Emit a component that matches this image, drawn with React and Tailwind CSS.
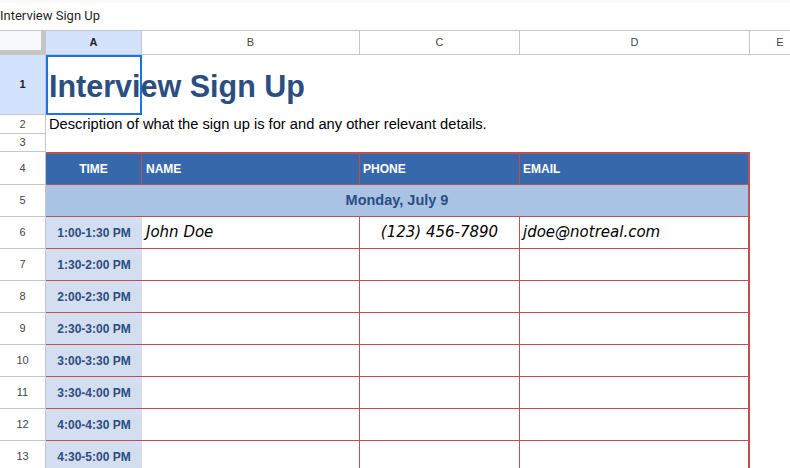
import React from "react";

const gray = "border-[#c4c7c5]";

const times = [
  "1:30-2:00 PM",
  "2:00-2:30 PM",
  "2:30-3:00 PM",
  "3:00-3:30 PM",
  "3:30-4:00 PM",
  "4:00-4:30 PM",
  "4:30-5:00 PM",
];

const RowHead = ({ n, sel }) => (
  <div
    className={`w-[46px] shrink-0 flex items-center justify-center border-r border-b border-[#c4c7c5] text-[11px] ${
      sel ? "bg-[#d3e3fd] font-bold text-[#1f1f1f]" : "bg-white text-[#444746]"
    }`}
  >
    {n}
  </div>
);

const hand = { fontFamily: "'Comic Sans MS', 'DejaVu Sans', sans-serif" };

const App = () => {
  return (
    <div
      className="w-[790px] h-[468px] overflow-hidden bg-white"
      style={{ fontFamily: "'Liberation Sans', Arial, sans-serif" }}
    >
      {/* title bar */}
      <div className="h-[3px] bg-[#f8f9fa]" />
      <div
        className="h-[27px] flex items-center text-[13px] text-[#1f1f1f] pb-[1px]"
        style={{ fontFamily: "Roboto, 'Liberation Sans', sans-serif" }}
      >
        Interview Sign Up
      </div>

      {/* column letters */}
      <div className={`flex h-[25px] border-t border-b ${gray} text-[11px] text-[#444746]`}>
        <div className="w-[46px] shrink-0 bg-[#f8f9fa] border-r-[5px] border-b-[4px] border-[#c4c7c5]" />
        <div className={`w-[96px] shrink-0 flex items-center justify-center bg-[#d3e3fd] border-r ${gray} font-bold text-[#1f1f1f]`}>
          A
        </div>
        <div className={`w-[218px] shrink-0 flex items-center justify-center border-r ${gray}`}>B</div>
        <div className={`w-[160px] shrink-0 flex items-center justify-center border-r ${gray}`}>C</div>
        <div className={`w-[230px] shrink-0 flex items-center justify-center border-r ${gray}`}>D</div>
        <div className="w-[60px] shrink-0 flex items-center justify-center">E</div>
      </div>

      {/* row 1 */}
      <div className="flex h-[60px]">
        <RowHead n="1" sel />
        <div className="w-[96px] shrink-0 border-2 border-[#1a73e8] flex items-center pl-[1px] pt-[2px]">
          <span className="whitespace-nowrap text-[30.5px] font-bold text-[#2b4d80] leading-none">
            Interview Sign Up
          </span>
        </div>
      </div>

      {/* row 2 */}
      <div className="flex h-[19px]">
        <RowHead n="2" />
        <div className="flex items-center pl-[3px] whitespace-nowrap text-[14.7px] text-black leading-none">
          Description of what the sign up is for and any other relevant details.
        </div>
      </div>

      {/* row 3 */}
      <div className="flex h-[18px]">
        <RowHead n="3" />
      </div>

      {/* row 4 header */}
      <div className="flex h-[33px]">
        <RowHead n="4" />
        <div className="flex border-t-2 border-b border-r-2 border-[#c0504d] bg-[#3868ac] text-white text-[12px] font-bold">
          <div className="w-[96px] flex items-center justify-center border-r border-[#c0504d] pb-[1px]">TIME</div>
          <div className="w-[218px] flex items-center pl-[4px] border-r border-[#c0504d] pb-[1px]">NAME</div>
          <div className="w-[160px] flex items-center pl-[3px] border-r border-[#c0504d] pb-[1px]">PHONE</div>
          <div className="w-[228px] flex items-center pl-[3px] pb-[1px]">EMAIL</div>
        </div>
      </div>

      {/* row 5 day */}
      <div className="flex h-[32px]">
        <RowHead n="5" />
        <div className="w-[704px] flex items-center justify-center border-b border-r-2 border-[#c0504d] bg-[#a9c3e5] text-[14.5px] font-bold text-[#2b4d80]">
          Monday, July 9
        </div>
      </div>

      {/* row 6 filled */}
      <div className="flex h-[32px]">
        <RowHead n="6" />
        <div className="flex border-b border-r-2 border-[#c0504d]">
          <div className="w-[96px] flex items-center justify-center bg-[#d3dff0] text-[12px] font-bold text-[#2b4d80]">
            1:00-1:30 PM
          </div>
          <div className="w-[218px] flex items-center pl-[4px] border-r border-[#c0504d] text-[15px] italic text-black" style={hand}>
            John Doe
          </div>
          <div className="w-[160px] flex items-center justify-center border-r border-[#c0504d] text-[15px] italic text-black" style={hand}>
            (123) 456-7890
          </div>
          <div className="w-[228px] flex items-center pl-[3px] text-[15px] italic text-black" style={hand}>
            jdoe@notreal.com
          </div>
        </div>
      </div>

      {times.map((t, i) => (
        <div key={t} className="flex h-[32px]">
          <RowHead n={String(i + 7)} />
          <div className="flex border-b border-r-2 border-[#c0504d]">
            <div className="w-[96px] flex items-center justify-center bg-[#d3dff0] text-[12px] font-bold text-[#2b4d80]">
              {t}
            </div>
            <div className="w-[218px] border-r border-[#c0504d]" />
            <div className="w-[160px] border-r border-[#c0504d]" />
            <div className="w-[228px]" />
          </div>
        </div>
      ))}
    </div>
  );
};

export default App;
